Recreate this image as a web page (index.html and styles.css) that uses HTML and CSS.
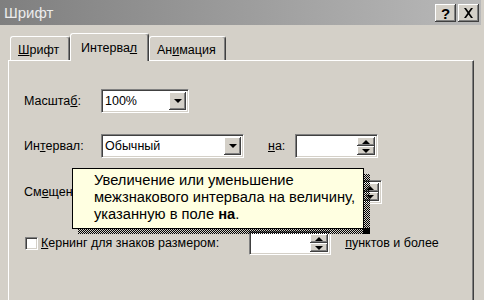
FILE: index.html
```html
<!DOCTYPE html>
<html lang="ru">
<head>
  <meta charset="UTF-8">
  <title>Шрифт</title>
  <link rel="stylesheet" href="styles.css">
</head>
<body>
  <div class="window">
    <!-- Title bar -->
    <div class="titlebar">
      <span class="title">Шрифт</span>
      <div class="caption-buttons">
        <button class="cap-btn">?</button>
        <button class="cap-btn">
          <svg width="11" height="10" viewBox="0 0 11 10"><path d="M1 0h2l2.5 3.5L8 0h2L6.5 5 10 10H8L5.5 6.5 3 10H1l3.5-5z" fill="#000"/></svg>
        </button>
      </div>
    </div>

    <!-- Tabs -->
    <div class="tabs">
      <div class="tab tab-font"><u>Ш</u>рифт</div>
      <div class="tab tab-spacing active">Интерва<u>л</u></div>
      <div class="tab tab-anim">Ан<u>и</u>мация</div>
    </div>

    <div class="panel">
      <div class="row row-scale">
        <label class="lbl">Масшта<u>б</u>:</label>
        <div class="combo combo-small">
          <span class="combo-text">100%</span>
          <span class="drop-btn"><i class="arrow-down"></i></span>
        </div>
      </div>

      <div class="row row-spacing">
        <label class="lbl">Ин<u>т</u>ервал:</label>
        <div class="combo combo-wide">
          <span class="combo-text">Обычный</span>
          <span class="drop-btn"><i class="arrow-down"></i></span>
        </div>
        <label class="lbl lbl-on"><u>н</u>а:</label>
        <div class="spin spin-on">
          <span class="spin-field"></span>
          <span class="spin-btns">
            <span class="spin-btn"><i class="arrow-up"></i></span>
            <span class="spin-btn"><i class="arrow-down"></i></span>
          </span>
        </div>
      </div>

      <div class="row row-offset">
        <label class="lbl">См<u>е</u>щение:</label>
        <div class="spin spin-offset">
          <span class="spin-field"></span>
          <span class="spin-btns">
            <span class="spin-btn"><i class="arrow-up"></i></span>
            <span class="spin-btn"><i class="arrow-down"></i></span>
          </span>
        </div>
      </div>

      <div class="row row-kern">
        <span class="checkbox"></span>
        <label class="lbl lbl-kern"><u>К</u>ернинг для знаков размером:</label>
        <div class="spin spin-kern">
          <span class="spin-field"></span>
          <span class="spin-btns">
            <span class="spin-btn"><i class="arrow-up"></i></span>
            <span class="spin-btn"><i class="arrow-down"></i></span>
          </span>
        </div>
        <label class="lbl lbl-points"><u>п</u>унктов и более</label>
      </div>

      <!-- Tooltip -->
      <div class="tooltip">
        Увеличение или уменьшение<br>
        межзнакового интервала на величину,<br>
        указанную в поле <b>на</b>.
      </div>
    </div>
  </div>
</body>
</html>
```

FILE: styles.css
```css
/* General */
body {
  margin: 0;
  padding: 0;
  width: 484px;
  height: 300px;
  overflow: hidden;
  font-family: "Liberation Sans", Arial, sans-serif;
  font-size: 12.5px;
  color: #000;
  background-color: #d4d0c8;
}

.window {
  height: 300px;
  overflow: hidden;
}

u {
  text-decoration: underline;
  text-underline-offset: 1px;
}

/* Title bar */
.titlebar {
  height: 25px;
  margin-right: 3px;
  display: flex;
  align-items: center;
  justify-content: space-between;
  background: linear-gradient(to right, #7f7f7f, #b9b9b9);
  padding: 0 2px 0 4px;
}

.title {
  color: #ececec;
  font-size: 15px;
}

.caption-buttons {
  display: flex;
  gap: 2px;
  padding-top: 1px;
}

.cap-btn {
  width: 21px;
  height: 18px;
  padding: 0;
  margin: 0;
  display: flex;
  align-items: center;
  justify-content: center;
  background-color: #d4d0c8;
  border: none;
  box-shadow: inset -1px -1px #404040, inset 1px 1px #fff, inset -2px -2px #808080;
  font-family: "Liberation Sans", Arial, sans-serif;
  font-weight: bold;
  font-size: 15px;
  line-height: 1;
}

/* Tabs */
.tabs {
  display: flex;
  align-items: flex-end;
  height: 35px;
  padding-left: 10px;
}

.tab {
  height: 24px;
  display: flex;
  align-items: center;
  box-sizing: border-box;
  border-top: 1px solid #fff;
  border-left: 1px solid #fff;
  border-right: 1px solid #404040;
  border-radius: 3px 3px 0 0;
  box-shadow: inset -1px 0 #808080;
  padding-top: 2px;
}

.tab-font {
  width: 60px;
  padding-left: 7px;
}

.tab-spacing {
  width: 79px;
  padding-left: 10px;
}

.tab-anim {
  width: 77px;
  padding-left: 7px;
}

.tab.active {
  height: 28px;
  margin-bottom: -1px;
  padding-top: 0;
  position: relative;
  background-color: #d4d0c8;
  z-index: 1;
}

/* Tab panel */
.panel {
  position: relative;
  box-sizing: border-box;
  height: 240px;
  margin: 0 10px 0 8px;
  border-top: 1px solid #fff;
  border-left: 1px solid #fff;
  border-right: 1px solid #404040;
  box-shadow: inset -1px 0 #808080;
  padding: 28px 0 0 15px;
}

.row {
  display: flex;
  align-items: center;
  height: 24px;
}

.row-spacing {
  margin-top: 21px;
}

.row-offset {
  margin-top: 22px;
}

.row-kern {
  margin-top: 27px;
}

.lbl {
  width: 77px;
  white-space: nowrap;
}

.lbl-on {
  width: auto;
  margin-left: 24px;
  margin-right: 10px;
}

.lbl-kern {
  width: auto;
  margin-left: 3px;
  margin-right: 30px;
}

.lbl-points {
  width: auto;
  margin-left: 14px;
}

/* Combo boxes */
.combo {
  height: 24px;
  box-sizing: border-box;
  display: flex;
  align-items: stretch;
  background-color: #fff;
  border-top: 1px solid #808080;
  border-left: 1px solid #808080;
  border-right: 1px solid #fff;
  border-bottom: 1px solid #fff;
  box-shadow: inset 1px 1px #404040, inset -1px -1px #d4d0c8;
  padding: 2px;
}

.combo-small {
  width: 88px;
}

.combo-wide {
  width: 143px;
}

.combo-text {
  flex: 1;
  display: flex;
  align-items: center;
  padding-left: 1px;
}

.drop-btn {
  width: 17px;
  display: flex;
  align-items: center;
  justify-content: center;
  background-color: #d4d0c8;
  box-shadow: inset -1px -1px #404040, inset 1px 1px #fff, inset -2px -2px #808080;
}

.arrow-down {
  width: 0;
  height: 0;
  border-left: 4px solid transparent;
  border-right: 4px solid transparent;
  border-top: 4px solid #000;
}

.arrow-up {
  width: 0;
  height: 0;
  border-left: 4px solid transparent;
  border-right: 4px solid transparent;
  border-bottom: 4px solid #000;
}

/* Spin boxes */
.spin {
  height: 24px;
  box-sizing: border-box;
  display: flex;
  background-color: #fff;
  border-top: 1px solid #808080;
  border-left: 1px solid #808080;
  border-right: 1px solid #fff;
  border-bottom: 1px solid #fff;
  box-shadow: inset 1px 1px #404040, inset -1px -1px #d4d0c8;
  padding: 2px;
}

.spin-on {
  width: 83px;
}

.spin-offset {
  width: 83px;
  margin-left: 198px;
}

.spin-kern {
  width: 82px;
}

.spin-field {
  flex: 1;
}

.spin-btns {
  width: 18px;
  display: flex;
  flex-direction: column;
}

.spin-btn {
  flex: 1;
  display: flex;
  align-items: center;
  justify-content: center;
  background-color: #d4d0c8;
  box-shadow: inset -1px -1px #404040, inset 1px 1px #fff, inset -2px -2px #808080;
}

/* Checkbox */
.checkbox {
  width: 13px;
  height: 13px;
  box-sizing: border-box;
  background-color: #fff;
  border-top: 1px solid #808080;
  border-left: 1px solid #808080;
  border-right: 1px solid #fff;
  border-bottom: 1px solid #fff;
  box-shadow: inset 1px 1px #404040, inset -1px -1px #d4d0c8;
  margin-left: 1px;
}

/* Tooltip */
.tooltip {
  position: absolute;
  left: 63px;
  top: 107px;
  box-sizing: border-box;
  width: 292px;
  height: 61px;
  padding: 3px 0 0 21px;
  background-color: #ffffe1;
  border: 1px solid #000;
  font-size: 14.7px;
  line-height: 17px;
  white-space: nowrap;
  z-index: 2;
}

.tooltip::after {
  content: "";
  position: absolute;
  left: 5px;
  top: 100%;
  width: calc(100% + 2px);
  height: 6px;
  background: repeating-conic-gradient(#000 0 25%, transparent 0 50%) 0 0 / 2px 2px;
}

.tooltip::before {
  content: "";
  position: absolute;
  left: 100%;
  top: 5px;
  width: 7px;
  height: calc(100% + 1px);
  background: repeating-conic-gradient(#000 0 25%, transparent 0 50%) 0 0 / 2px 2px;
}
```
